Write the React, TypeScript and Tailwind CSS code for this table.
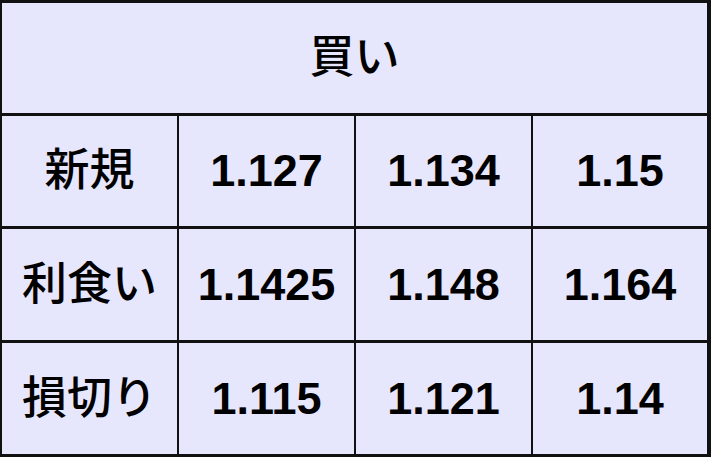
const rows = [
  { label: "新規", values: ["1.127", "1.134", "1.15"] },
  { label: "利食い", values: ["1.1425", "1.148", "1.164"] },
  { label: "損切り", values: ["1.115", "1.121", "1.14"] },
];

const font = {
  fontFamily: '"Liberation Sans", Arial, "Noto Sans CJK JP", sans-serif',
};

export default function App() {
  return (
    <div
      className="w-[711px] h-[457px] bg-[#111111] pt-[3px] pl-[2px] pr-[3px] pb-[3px] grid grid-cols-[175px_175px_175px_174px] grid-rows-[110px_110px_111px_111px] gap-x-[2px] gap-y-[3px] text-black text-[45px]"
      style={font}
    >
      <div className="col-span-4 bg-[#e6e6fc] flex items-center justify-center font-medium">
        買い
      </div>
      {rows.map((row) => (
        <>
          <div
            key={row.label}
            className="bg-[#e6e6fc] flex items-center justify-center font-medium"
          >
            {row.label}
          </div>
          {row.values.map((v, i) => (
            <div
              key={row.label + i}
              className="bg-[#e6e6fc] flex items-center justify-center font-bold"
            >
              {v}
            </div>
          ))}
        </>
      ))}
    </div>
  );
}
